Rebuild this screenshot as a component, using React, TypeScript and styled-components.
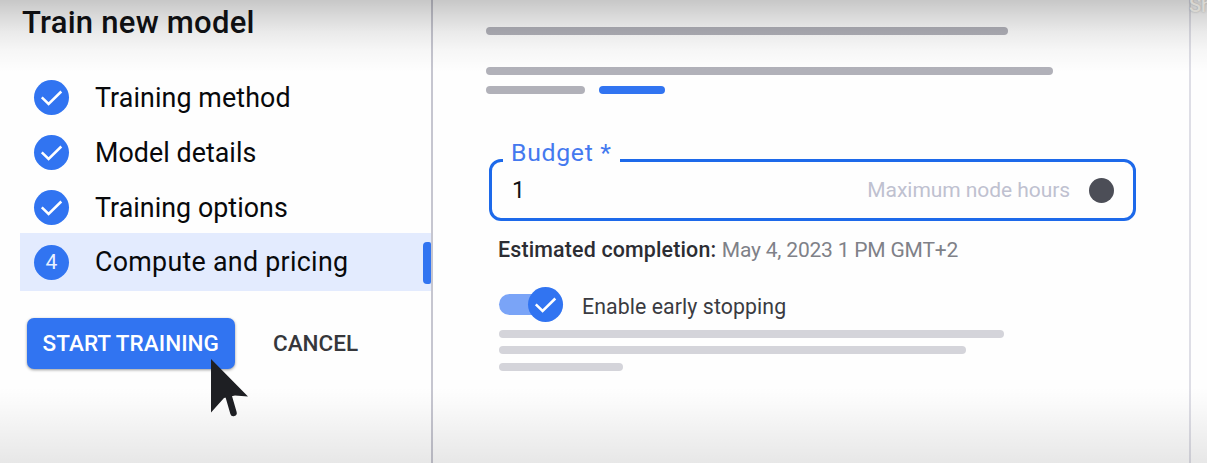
import React from 'react';
import styled, { createGlobalStyle } from 'styled-components';

const GlobalStyle = createGlobalStyle`
  *, *::before, *::after { box-sizing: border-box; }
  body { margin: 0; background: #fff; font-family: Roboto, "Liberation Sans", sans-serif; }
`;

const Page = styled.div`
  position: relative;
  display: flex;
  width: 1207px;
  height: 463px;
  overflow: hidden;
  background: #fefefe;
`;

const Shade = styled.div`
  position: absolute;
  inset: 0;
  pointer-events: none;
  background:
    linear-gradient(to bottom, rgba(0, 0, 0, 0.215) 0, rgba(0, 0, 0, 0.15) 15px, rgba(0, 0, 0, 0.08) 32px, rgba(0, 0, 0, 0.03) 50px, transparent 72px),
    linear-gradient(to top, rgba(0, 0, 0, 0.09) 0, rgba(0, 0, 0, 0.05) 32px, rgba(0, 0, 0, 0.015) 60px, transparent 76px);
`;

const Text = styled.span<{ $size: number; $color?: string; $weight?: number; $spacing?: number }>`
  font-size: ${(p) => p.$size}px;
  font-weight: ${(p) => p.$weight ?? 400};
  color: ${(p) => p.$color ?? '#101114'};
  letter-spacing: ${(p) => p.$spacing ?? 0}px;
  line-height: 1;
  white-space: pre;
`;

const Sidebar = styled.aside`
  display: flex;
  flex-direction: column;
  width: 433px;
  border-right: 2px solid #c6c6d0;
`;

const Title = styled.h1`
  display: flex;
  align-items: center;
  height: 70px;
  margin: 0;
  padding: 0 0 25px 22px;
`;

const Steps = styled.ol`
  display: flex;
  flex-direction: column;
  margin: 0;
  padding: 0 0 0 20px;
  list-style: none;
`;

const Step = styled.li<{ $active?: boolean }>`
  display: flex;
  align-items: center;
  gap: 26px;
  height: ${(p) => (p.$active ? 58 : 55)}px;
  margin-top: ${(p) => (p.$active ? -2 : 0)}px;
  padding-left: 14px;
  background: ${(p) => (p.$active ? '#e3ebfe' : 'transparent')};
`;

const StepName = styled(Text)`
  padding-top: 1px;
`;

const Dot = styled.span`
  display: flex;
  align-items: center;
  justify-content: center;
  width: 35px;
  height: 35px;
  border-radius: 50%;
  background: #3174f1;
`;

const Marker = styled.span`
  width: 8px;
  height: 42px;
  margin: 2px 0 0 auto;
  border-radius: 4px 2px 2px 4px;
  background: #3174f1;
`;

const Actions = styled.div`
  display: flex;
  align-items: center;
  gap: 38px;
  padding: 27px 0 0 26.5px;
`;

const Primary = styled.button`
  display: flex;
  align-items: center;
  justify-content: center;
  width: 208.5px;
  height: 51px;
  padding: 0;
  border: 0;
  border-radius: 7px;
  background: #3174f1;
  box-shadow: 0 1px 3px rgba(0, 0, 0, 0.4);
  font-family: inherit;
`;

const Plain = styled.button`
  padding: 0;
  border: 0;
  background: none;
  font-family: inherit;
`;

const Pointer = styled.svg`
  position: absolute;
  left: 206px;
  top: 354px;
`;

const Main = styled.main`
  display: flex;
  flex-direction: column;
  width: 758px;
  padding: 27px 0 0 52.5px;
  border-right: 2px solid #dedee6;
`;

const Bar = styled.div<{ $width: number; $color?: string }>`
  width: ${(p) => p.$width}px;
  height: 8px;
  border-radius: 4px;
  background: ${(p) => p.$color ?? '#b1b1b9'};
`;

const Intro = styled.div`
  display: flex;
  flex-direction: column;
`;

const BarRow = styled.div<{ $top: number }>`
  display: flex;
  gap: 14px;
  margin-top: ${(p) => p.$top}px;
`;

const Field = styled.div`
  position: relative;
  display: flex;
  align-items: center;
  width: 647px;
  height: 62px;
  margin: 65px 0 0 3.5px;
  padding: 0 19px 0 20px;
  border: 3px solid #1d69ea;
  border-radius: 12px;
`;

const FieldLabel = styled.label`
  position: absolute;
  top: -22px;
  left: 11px;
  display: flex;
  align-items: center;
  width: 117px;
  height: 26px;
  padding-left: 8px;
  background: #fefefe;
`;

const FieldValue = styled(Text)`
  padding-top: 1px;
`;

const Hint = styled.span`
  display: flex;
  align-items: center;
  gap: 19px;
  margin-left: auto;
`;

const Help = styled.span`
  width: 25px;
  height: 25px;
  border-radius: 50%;
  background: #4c4e57;
`;

const Details = styled.section`
  display: flex;
  flex-direction: column;
  padding-left: 13.5px;
`;

const Estimate = styled.div`
  display: flex;
  align-items: center;
  gap: 5.5px;
  height: 24px;
  margin: 17px 0 0 -1px;
`;

const ToggleRow = styled.div`
  display: flex;
  align-items: center;
  gap: 19px;
  height: 36px;
  margin-top: 24px;
`;

const ToggleText = styled(Text)`
  padding-top: 5px;
`;

const Track = styled.span`
  display: flex;
  align-items: center;
  justify-content: flex-end;
  width: 64px;
  height: 21px;
  border-radius: 11px;
  background: #7aa4f7;
`;

const Lines = styled.div`
  display: flex;
  flex-direction: column;
  gap: 8.4px;
  margin-top: 8px;
`;

const Corner = styled.span`
  position: absolute;
  top: -5px;
  left: 1189px;
  font-size: 20px;
  font-weight: 500;
  line-height: 20px;
  color: #d9d7d2;
  text-shadow: 0 0 2px #999;
`;

const Check = () => (
  <svg width="35" height="35" viewBox="0 0 35 35" fill="none" stroke="#fff" strokeWidth="2.5">
    <path d="M7.8 17.4 14.6 24 27.3 11.5" />
  </svg>
);

const steps = [
  { label: 'Training method', spacing: 0.1 },
  { label: 'Model details', spacing: 0.05 },
  { label: 'Training options', spacing: 0.05 },
];

export default function App() {
  return (
    <>
      <GlobalStyle />
      <Page>
        <Sidebar>
          <Title>
            <Text $size={31} $weight={500} $spacing={0.25}>Train new model</Text>
          </Title>
          <Steps>
            {steps.map((s) => (
              <Step key={s.label}>
                <Dot><Check /></Dot>
                <StepName $size={26.8} $color="#08090b" $spacing={s.spacing}>{s.label}</StepName>
              </Step>
            ))}
            <Step $active>
              <Dot><Text $size={21} $color="#e8f0ff">4</Text></Dot>
              <StepName $size={26.8} $color="#08090b" $spacing={0.29}>Compute and pricing</StepName>
              <Marker />
            </Step>
          </Steps>
          <Actions>
            <Primary><Text $size={22.5} $weight={500} $color="#fff" $spacing={0.06}>START TRAINING</Text></Primary>
            <Plain><Text $size={22.5} $weight={500} $color="#36373b">CANCEL</Text></Plain>
          </Actions>
        </Sidebar>
        <Main>
          <Intro>
            <Bar $width={522.5} />
            <BarRow $top={32}><Bar $width={567.5} /></BarRow>
            <BarRow $top={11}>
              <Bar $width={99.5} />
              <Bar $width={65.5} $color="#3174f1" />
            </BarRow>
          </Intro>
          <Field>
            <FieldLabel><Text $size={24.8} $color="#4479ef" $spacing={0.7}>Budget *</Text></FieldLabel>
            <FieldValue $size={23}>1</FieldValue>
            <Hint>
              <FieldValue $size={21} $color="#bfc1d0" $spacing={-0.06}>Maximum node hours</FieldValue>
              <Help />
            </Hint>
          </Field>
          <Details>
            <Estimate>
              <Text $size={21.4} $weight={500} $color="#2c2d33" $spacing={0.16}>Estimated completion:</Text>
              <Text $size={21} $color="#7f8188" $spacing={-0.2}>May 4, 2023 1 PM GMT+2</Text>
            </Estimate>
            <ToggleRow>
              <Track><Dot><Check /></Dot></Track>
              <ToggleText $size={21.3} $color="#3a3b41" $spacing={0.08}>Enable early stopping</ToggleText>
            </ToggleRow>
            <Lines>
              <Bar $width={505} $color="#d4d4da" />
              <Bar $width={466.5} $color="#d4d4da" />
              <Bar $width={123.5} $color="#d4d4da" />
            </Lines>
          </Details>
        </Main>
        <Shade />
        <Corner>Sh</Corner>
        <Pointer width="44" height="66" viewBox="0 0 44 66">
          <path d="M5 5 42 42.5 29 41.5 18 44 5 58.5Z" fill="#1e1f23" />
          <path d="M22 40 27.5 59" stroke="#1e1f23" strokeWidth="6.5" strokeLinecap="round" />
        </Pointer>
      </Page>
    </>
  );
}
